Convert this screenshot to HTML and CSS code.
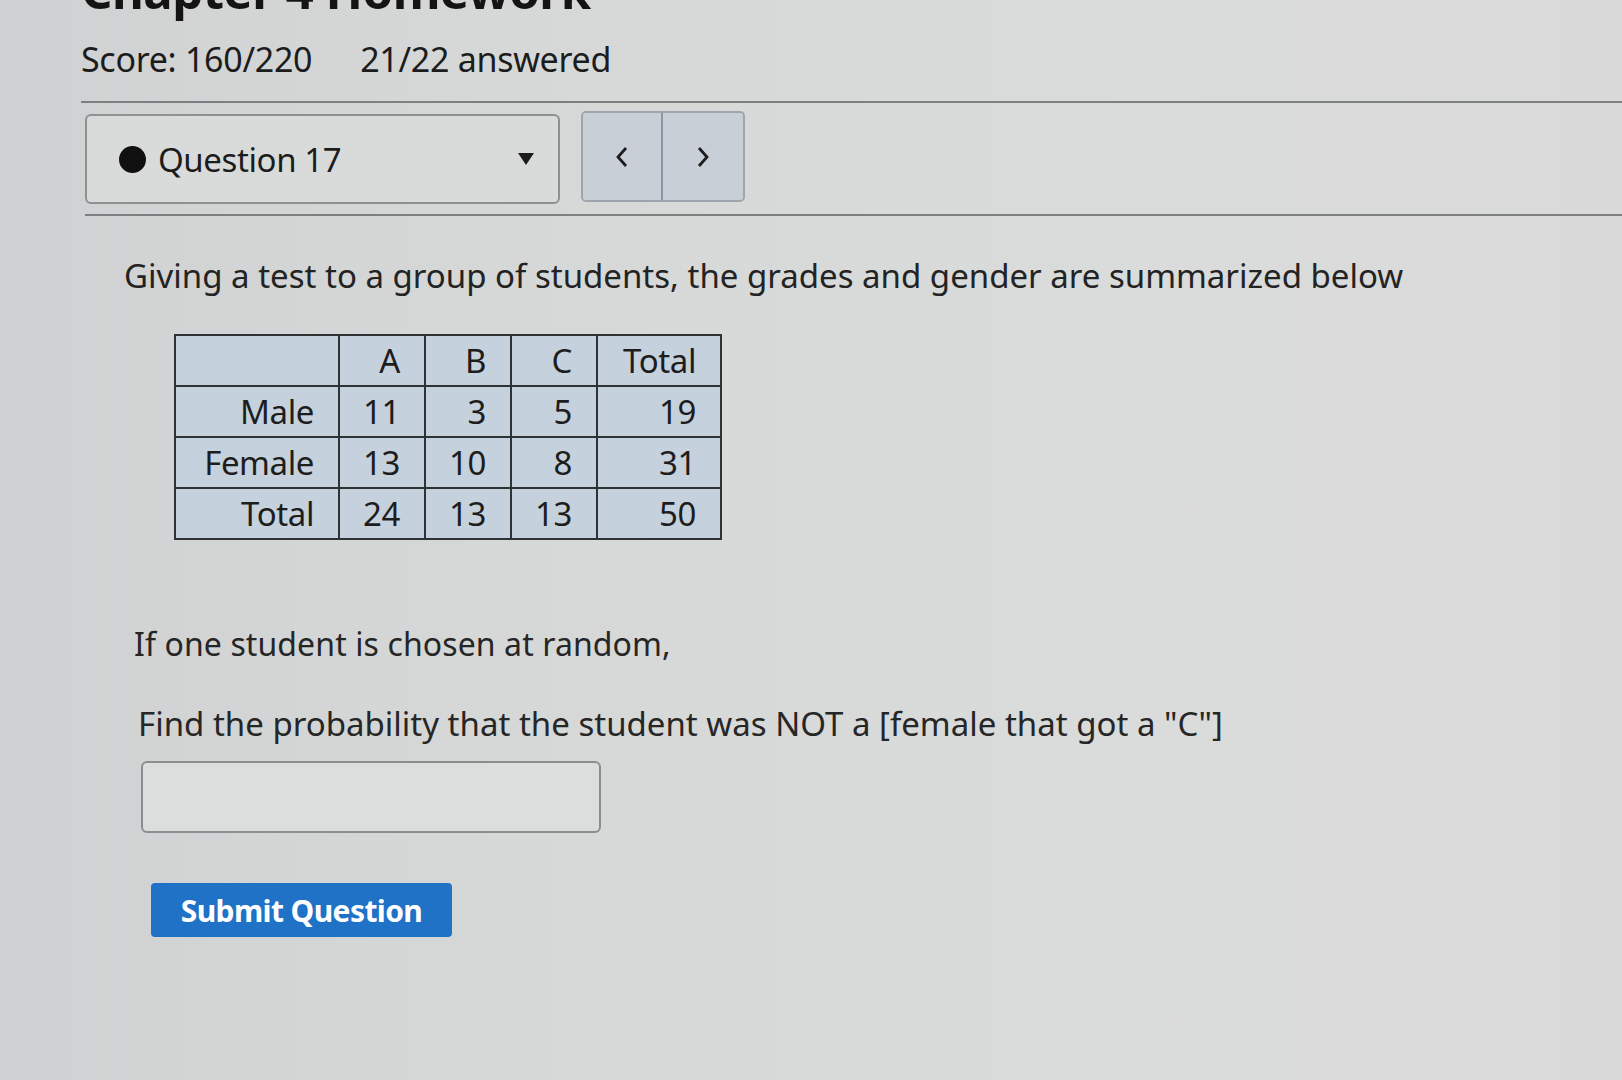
FILE: index.html
```html
<!DOCTYPE html>
<html>
<head>
<meta charset="utf-8">
<title>Chapter 4 Homework</title>
<link rel="stylesheet" href="styles.css">
</head>
<body>
<div class="page">
  <h1 class="title">Chapter 4 Homework</h1>
  <div class="scoreline">
    <span class="score">Score: 160/220</span>
    <span class="answered">21/22 answered</span>
  </div>
  <div class="rule"></div>
  <div class="qnav">
    <div class="qselect">
      <span class="dot"></span>
      <span class="qlabel">Question 17</span>
      <svg class="caret" width="16" height="12" viewBox="0 0 16 12"><polygon points="0,0 16,0 8,12" fill="#1b1b1b"/></svg>
    </div>
    <div class="navbtns">
      <button class="navbtn prev" aria-label="Previous">
        <svg width="14" height="24" viewBox="0 0 14 24"><polyline points="11,3 3,12 11,21" fill="none" stroke="#1e1e1e" stroke-width="2.8"/></svg>
      </button>
      <button class="navbtn next" aria-label="Next">
        <svg width="14" height="24" viewBox="0 0 14 24"><polyline points="3,3 11,12 3,21" fill="none" stroke="#1e1e1e" stroke-width="2.8"/></svg>
      </button>
    </div>
  </div>
  <div class="rule rule2"></div>
  <div class="question">
    <p class="intro">Giving a test to a group of students, the grades and gender are summarized below</p>
    <table class="grid">
      <tr><th class="lbl"></th><th>A</th><th>B</th><th>C</th><th class="tot">Total</th></tr>
      <tr><th class="lbl">Male</th><td>11</td><td>3</td><td>5</td><td class="tot">19</td></tr>
      <tr><th class="lbl">Female</th><td>13</td><td>10</td><td>8</td><td class="tot">31</td></tr>
      <tr><th class="lbl">Total</th><td>24</td><td>13</td><td>13</td><td class="tot">50</td></tr>
    </table>
    <p class="line1">If one student is chosen at random,</p>
    <p class="line2">Find the probability that the student was NOT a [female that got a "C"]</p>
    <div class="answer"></div>
    <button class="submit">Submit Question</button>
  </div>
</div>
</body>
</html>
```
FILE: styles.css
```css
html, body {
  margin: 0;
  padding: 0;
}
body {
  width: 1622px;
  height: 1080px;
  overflow: hidden;
  background: linear-gradient(90deg, #cfd1d2 0%, #d6d8d8 30%, #dadbdb 70%, #d9dad9 100%);
  font-family: "Noto Sans", "Open Sans", "DejaVu Sans", sans-serif;
  color: #222;
}
.page {
  padding-top: 1px;
  padding-left: 81px;
}
.title {
  margin: -36px 0 0 0;
  font-size: 49px;
  line-height: 50px;
  font-weight: 700;
  color: #141414;
  letter-spacing: -0.5px;
}
.scoreline {
  margin-top: 23px;
  display: flex;
  gap: 48px;
  font-size: 34px;
  line-height: 42px;
  color: #1c1c1c;
  letter-spacing: -0.3px;
}
.rule {
  margin-top: 21px;
  height: 0;
  border-top: 2px solid #7d8081;
}
.qnav {
  display: flex;
  align-items: flex-start;
  gap: 21px;
  margin-top: 8px;
  padding-left: 4px;
}
.qselect {
  width: 475px;
  height: 90px;
  margin-top: 3px;
  box-sizing: border-box;
  border: 2px solid #8e9192;
  border-radius: 6px;
  display: flex;
  align-items: center;
  padding: 0 24px 0 32px;
  background: #d9dbdb;
}
.dot {
  width: 27px;
  height: 27px;
  border-radius: 50%;
  background: #101010;
  flex: none;
}
.qlabel {
  margin-left: 12px;
  font-size: 33px;
  color: #1c1c1c;
  letter-spacing: -0.4px;
  flex: 1;
}
.caret {
  flex: none;
}
.navbtns {
  display: flex;
  height: 87px;
  border: 2px solid #9ea5ad;
  border-radius: 5px;
  overflow: hidden;
  background: #c8cfd6;
}
.navbtn {
  width: 80px;
  height: 100%;
  border: 0;
  background: #c8cfd6;
  display: flex;
  align-items: center;
  justify-content: center;
  padding: 0;
}
.navbtn.prev {
  border-right: 2px solid #8d96a0;
}
.rule2 {
  margin-top: 10px;
  margin-left: 4px;
}
.question {
  padding-left: 43px;
}
.intro {
  margin: 35px 0 0 0;
  font-size: 33px;
  line-height: 50px;
  color: #232323;
  letter-spacing: 0;
}
.grid {
  margin: 33px 0 0 50px;
  border-collapse: collapse;
  background: #c5d1dc;
  font-size: 33px;
  color: #1d1d1d;
  border: 2px solid #2f3235;
}
.grid th, .grid td {
  border: 2px solid #2f3235;
  height: 49px;
  padding: 0 24px 0 6px;
  text-align: right;
  font-weight: 400;
  line-height: 49px;
  letter-spacing: -0.4px;
}
.grid td, .grid th { width: 54px; }
.grid th.lbl { width: 132px; }
.grid .tot { width: 92px; }
.line1 {
  margin: 79px 0 0 10px;
  font-size: 32px;
  line-height: 50px;
  color: #262626;
  letter-spacing: 0.1px;
}
.line2 {
  margin: 30px 0 0 14px;
  font-size: 33px;
  line-height: 50px;
  color: #262626;
  letter-spacing: 0;
}
.answer {
  margin: 12px 0 0 17px;
  width: 460px;
  height: 72px;
  box-sizing: border-box;
  border: 2px solid #8b8e90;
  border-radius: 6px;
  background: #dcdddd;
}
.submit {
  display: block;
  margin: 50px 0 0 27px;
  width: 301px;
  height: 54px;
  border: 0;
  border-radius: 4px;
  background: #1f72c6;
  color: #fff;
  font-family: "Noto Sans", "Open Sans", sans-serif;
  font-size: 30px;
  font-weight: 700;
  letter-spacing: -0.6px;
  padding: 0;
}
```
